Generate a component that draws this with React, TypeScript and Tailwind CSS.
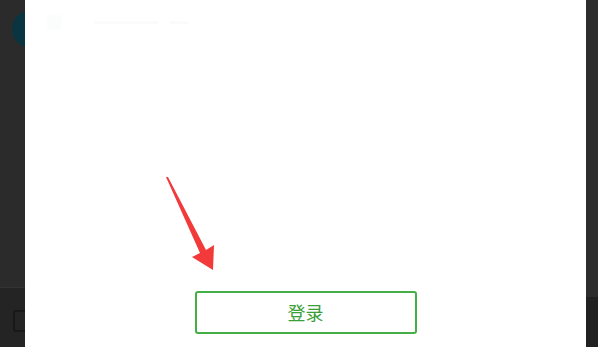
export default function App() {
  return (
    <div className="relative flex h-[347px] w-[598px] overflow-hidden bg-[#2b2b2b]" style={{ fontFamily: '"Noto Sans CJK SC", "Noto Sans", sans-serif' }}>
      {/* left strip of the page behind the dialog */}
      <div className="flex w-[25px] flex-col overflow-hidden">
        <div className="flex-1 bg-[#2b2b2b] pt-[10px]">
          <div className="ml-[12px] h-[38px] w-[38px] shrink-0 rounded-full bg-[#0a3440]" />
        </div>
        <div className="h-[60px] border-t border-[#333] bg-[#242424] pt-[22px]">
          <div className="ml-[13px] h-[22px] w-[20px] rounded-[3px] border-2 border-[#181818]" />
        </div>
      </div>

      {/* dialog */}
      <div className="flex flex-1 flex-col bg-white">
        <div className="flex items-center gap-3 px-[22px] pt-[15px]">
          <div className="h-[15px] w-[15px] rounded bg-[#fbfcfc]" />
          <div className="ml-[20px] h-[3px] w-[64px] bg-[#fbfbfb]" />
          <div className="h-[3px] w-[18px] bg-[#fbfbfb]" />
        </div>
        <div className="flex-1" />
        <div className="pb-[13px]">
          <button className="mx-auto flex h-[43px] w-[222px] items-center justify-center rounded-[3px] border-2 border-[#46ae46] bg-white text-[18px] text-[#3a9f3a]">
            登录
          </button>
        </div>
      </div>

      {/* right strip */}
      <div className="flex w-[12px] flex-col">
        <div className="flex-1 bg-[#2d2d2d]" />
        <div className="h-[50px] bg-[#212121]" />
      </div>

      {/* red annotation arrow */}
      <svg className="absolute left-0 top-0" width="598" height="347" viewBox="0 0 598 347">
        <polygon points="166,177 168,177 206,250 214,245 213,270 192,257 200,253" fill="#f23a3a" />
      </svg>
    </div>
  );
}
